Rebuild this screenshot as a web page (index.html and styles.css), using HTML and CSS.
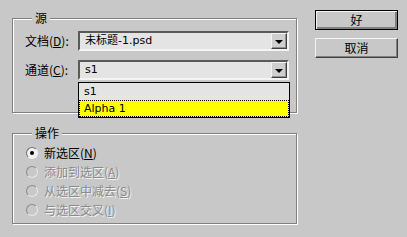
FILE: index.html
```html
<!DOCTYPE html>
<html>
<head>
<meta charset="utf-8">
<link rel="stylesheet" href="styles.css">
</head>
<body>
<div class="dialog">
  <div class="left">
    <fieldset class="group g1">
      <legend>源</legend>
      <div class="row">
        <span class="label">文档(<u>D</u>):</span>
        <div class="select"><span class="val">未标题-1.psd</span><span class="drop"><i></i></span></div>
      </div>
      <div class="row r2">
        <span class="label">通道(<u>C</u>):</span>
        <div class="select"><span class="val">s1</span><span class="drop"><i></i></span></div>
        <div class="list">
          <div class="item">s1</div>
          <div class="item sel">Alpha 1</div>
        </div>
      </div>
    </fieldset>
    <fieldset class="group g2">
      <legend>操作</legend>
      <div class="radio first"><span class="dot on"></span><span class="rt">新选区(<u>N</u>)</span></div>
      <div class="radio dis"><span class="dot"></span><span class="rt">添加到选区(<u>A</u>)</span></div>
      <div class="radio dis"><span class="dot"></span><span class="rt">从选区中减去(<u>S</u>)</span></div>
      <div class="radio dis"><span class="dot"></span><span class="rt">与选区交叉(<u>I</u>)</span></div>
    </fieldset>
  </div>
  <div class="right">
    <button class="btn def">好</button>
    <button class="btn">取消</button>
  </div>
</div>
</body>
</html>
```
FILE: styles.css
```css
html, body {
  margin: 0;
  padding: 0;
  background: #c8c8c8;
  width: 407px;
  height: 237px;
  overflow: hidden;
}
body {
  font-family: "DejaVu Sans", "Noto Sans CJK SC", sans-serif;
  font-size: 12px;
  color: #000;
}
.dialog {
  display: flex;
  align-items: flex-start;
  padding: 10px 0 0 12px;
}
.left {
  width: 285px;
  flex-shrink: 0;
  display: flex;
  flex-direction: column;
}
.group {
  display: block;
  margin: 0;
  flex-shrink: 0;
  box-sizing: border-box;
  border: 1px solid #808080;
  box-shadow: inset 1px 1px 0 #fff, 1px 1px 0 #fff;
  padding: 0 7px 0 12px;
  min-width: 0;
}
.group legend {
  padding: 0 3px;
  margin-left: 7px;
  line-height: 16px;
  height: 16px;
  background: #c8c8c8;
  position: relative;
  font-family: "Noto Sans CJK SC", sans-serif;
  font-size: 12px;
}
.g1 {
  height: 103px;
}
.g2 {
  margin-top: 12px;
  height: 99px;
}
.row {
  display: flex;
  align-items: center;
  height: 20px;
  margin-top: 5px;
  position: relative;
}
.row.r2 {
  margin-top: 9px;
}
.label {
  width: 53px;
  font-family: "Noto Sans CJK SC", sans-serif;
  font-size: 12px;
  line-height: 20px;
}
.label u, .rt u {
  text-decoration: underline;
  text-underline-offset: 1px;
}
.select {
  width: 211px;
  height: 20px;
  box-sizing: border-box;
  background: #e4e4e4;
  border-style: solid;
  border-width: 2px;
  border-color: #5a5a5a #f4f4f4 #f4f4f4 #5a5a5a;
  display: flex;
  align-items: center;
  justify-content: space-between;
}
.val {
  padding-left: 5px;
  font-family: "DejaVu Sans", "Noto Sans CJK SC", sans-serif;
  font-size: 11px;
  line-height: 16px;
}
.drop {
  width: 16px;
  height: 16px;
  box-sizing: border-box;
  background: #cfcfcf;
  border: 1px solid;
  border-color: #f4f4f4 #404040 #404040 #f4f4f4;
  box-shadow: inset -1px -1px 0 #909090;
  display: flex;
  align-items: center;
  justify-content: center;
}
.drop i {
  width: 0;
  height: 0;
  border-left: 4px solid transparent;
  border-right: 4px solid transparent;
  border-top: 4px solid #000;
  margin-top: 1px;
}
.list {
  position: absolute;
  left: 53px;
  top: 22px;
  width: 212px;
  box-sizing: border-box;
  border: 1px solid #000;
  background: #e4e4e4;
  z-index: 2;
}
.item {
  height: 17px;
  line-height: 17px;
  padding-left: 5px;
  font-family: "DejaVu Sans", sans-serif;
  font-size: 11px;
  box-sizing: border-box;
}
.item.sel {
  background: #ffff00;
  outline: 1px dotted #000;
  outline-offset: -1px;
}
.radio {
  display: flex;
  align-items: center;
  height: 19px;
  margin-left: 1px;
}
.radio.first {
  margin-top: 2px;
}
.dot {
  width: 12px;
  height: 12px;
  box-sizing: border-box;
  border-radius: 50%;
  border: 1px solid;
  border-color: #707070 #f4f4f4 #f4f4f4 #707070;
  background: #c8c8c8;
  display: flex;
  align-items: center;
  justify-content: center;
  margin-right: 6px;
}
.dis .dot {
  border-color: #8a8a8a #e8e8e8 #e8e8e8 #8a8a8a;
}
.dot.on {
  background: #f2f2f2;
}
.dot.on::after {
  content: "";
  width: 4px;
  height: 4px;
  border-radius: 50%;
  background: #000;
}
.rt {
  font-family: "Noto Sans CJK SC", sans-serif;
  font-size: 12px;
  line-height: 19px;
}
.dis .rt {
  color: #8a8a8a;
  text-shadow: 1px 1px 0 #f4f4f4;
}
.right {
  margin-left: 18px;
  display: flex;
  flex-direction: column;
  gap: 8px;
}
.btn {
  width: 83px;
  height: 20px;
  margin: 0;
  padding: 0;
  box-sizing: border-box;
  background: #c8c8c8;
  border: 1px solid;
  border-color: #f4f4f4 #404040 #404040 #f4f4f4;
  box-shadow: inset -1px -1px 0 #808080;
  font-family: "Noto Sans CJK SC", sans-serif;
  font-size: 12px;
  color: #000;
  line-height: 16px;
}
.btn.def {
  border: 1px solid #000;
  box-shadow: inset 1px 1px 0 #f4f4f4, inset -2px -2px 0 #808080;
}
```
